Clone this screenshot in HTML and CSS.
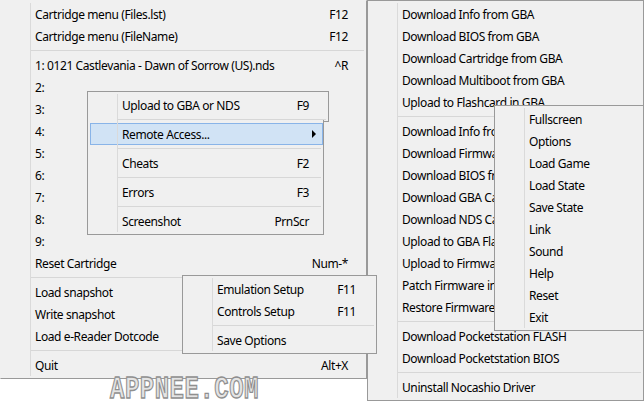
FILE: index.html
```html
<!DOCTYPE html>
<html>
<head>
    <title>Menus</title>
    <link rel="stylesheet" href="styles.css">
</head>
<body>
    <div class="screen">

        <!-- main menu -->
        <div class="menu menu-main">
            <div class="item"><span>Cartridge menu (Files.lst)</span><span>F12</span></div>
            <div class="item"><span>Cartridge menu (FileName)</span><span>F12</span></div>
            <div class="sep"></div>
            <div class="item"><span>1: 0121 Castlevania - Dawn of Sorrow (US).nds</span><span>^R</span></div>
            <div class="item"><span>2:</span></div>
            <div class="item"><span>3:</span></div>
            <div class="item"><span>4:</span></div>
            <div class="item"><span>5:</span></div>
            <div class="item"><span>6:</span></div>
            <div class="item"><span>7:</span></div>
            <div class="item"><span>8:</span></div>
            <div class="item"><span>9:</span></div>
            <div class="item"><span>Reset Cartridge</span><span>Num-*</span></div>
            <div class="sep"></div>
            <div class="item"><span>Load snapshot</span></div>
            <div class="item"><span>Write snapshot</span></div>
            <div class="item"><span>Load e-Reader Dotcode</span></div>
            <div class="sep"></div>
            <div class="item"><span>Quit</span><span>Alt+X</span></div>
        </div>

        <!-- remote menu -->
        <div class="menu menu-remote">
            <div class="item"><span>Download Info from GBA</span></div>
            <div class="item"><span>Download BIOS from GBA</span></div>
            <div class="item"><span>Download Cartridge from GBA</span></div>
            <div class="item"><span>Download Multiboot from GBA</span></div>
            <div class="item"><span>Upload to Flashcard in GBA</span></div>
            <div class="sep"></div>
            <div class="item"><span>Download Info from NDS</span></div>
            <div class="item"><span>Download Firmware from NDS</span></div>
            <div class="item"><span>Download BIOS from NDS</span></div>
            <div class="item"><span>Download GBA Cartridge from NDS</span></div>
            <div class="item"><span>Download NDS Cartridge from NDS</span></div>
            <div class="item"><span>Upload to GBA Flashcard in NDS</span></div>
            <div class="item"><span>Upload to Firmware in NDS</span></div>
            <div class="item"><span>Patch Firmware in NDS</span></div>
            <div class="item"><span>Restore Firmware in NDS</span></div>
            <div class="sep"></div>
            <div class="item"><span>Download Pocketstation FLASH</span></div>
            <div class="item"><span>Download Pocketstation BIOS</span></div>
            <div class="sep"></div>
            <div class="item"><span>Uninstall Nocashio Driver</span></div>
        </div>

        <!-- utility menu, first row sits behind the rest -->
        <div class="menu menu-upload">
            <div class="item"><span>Upload to GBA or NDS</span><span>F9</span></div>
            <div class="sep"></div>
        </div>
        <div class="menu menu-utility">
            <div class="item active"><span>Remote Access...</span><span class="arrow"></span></div>
            <div class="sep"></div>
            <div class="item"><span>Cheats</span><span>F2</span></div>
            <div class="sep"></div>
            <div class="item"><span>Errors</span><span>F3</span></div>
            <div class="sep"></div>
            <div class="item"><span>Screenshot</span><span>PrnScr</span></div>
        </div>

        <!-- options menu -->
        <div class="menu menu-options">
            <div class="item"><span>Emulation Setup</span><span>F11</span></div>
            <div class="item"><span>Controls Setup</span><span>F11</span></div>
            <div class="sep"></div>
            <div class="item"><span>Save Options</span></div>
        </div>

        <!-- window menu -->
        <div class="menu menu-window">
            <div class="item"><span>Fullscreen</span></div>
            <div class="item"><span>Options</span></div>
            <div class="item"><span>Load Game</span></div>
            <div class="item"><span>Load State</span></div>
            <div class="item"><span>Save State</span></div>
            <div class="item"><span>Link</span></div>
            <div class="item"><span>Sound</span></div>
            <div class="item"><span>Help</span></div>
            <div class="item"><span>Reset</span></div>
            <div class="item"><span>Exit</span></div>
        </div>

        <div class="watermark">APPNEE.COM</div>
    </div>
</body>
</html>
```

FILE: styles.css
```css
body {
    margin: 0;
    padding: 0;
    background-color: #fff;
    font-family: "Noto Sans", "Open Sans", sans-serif;
    font-size: 12px;
    letter-spacing: -0.4px;
    color: #000;
}

.screen {
    position: relative;
    width: 644px;
    height: 401px;
    overflow: hidden;
}

.menu {
    position: absolute;
    box-sizing: border-box;
    background-color: #f0f0f0;
    border: 1px solid #999;
    padding: 2px 0;
}

/* gutter line */
.menu::before {
    content: "";
    position: absolute;
    left: 29px;
    top: 2px;
    bottom: 2px;
    width: 1px;
    background-color: #dadada;
    z-index: 1;
}

.item {
    display: flex;
    align-items: center;
    justify-content: space-between;
    box-sizing: border-box;
    height: 22px;
    padding: 0 18px 0 34px;
    white-space: nowrap;
}

.sep {
    height: 1px;
    margin: 3px 2px 3px 29px;
    background-color: #d7d7d7;
}

.menu-main {
    left: 0;
    top: 0;
    width: 367px;
    border-left-color: #f0f0f0;
    border-top-color: #f0f0f0;
}

.menu-remote {
    left: 367px;
    top: 0;
    width: 277px;
}

.menu-upload {
    left: 87px;
    top: 91px;
    width: 242px;
    padding-bottom: 0;
}

.menu-upload .item {
    padding-right: 19px;
}

.menu-upload .sep {
    margin-bottom: 1px;
}

.menu-utility {
    left: 87px;
    top: 120px;
    width: 237px;
    border-top: none;
    padding-top: 3px;
}

.menu-utility::before {
    top: 0;
}

.menu-utility .item {
    padding-right: 14px;
}

.item.active {
    margin-left: 2px;
    padding-left: 31px;
    padding-right: 6px;
    background-color: #d1e3f5;
    border: 1px solid #89b4e8;
}

.arrow {
    width: 0;
    height: 0;
    border-left: 4px solid #000;
    border-top: 4px solid transparent;
    border-bottom: 4px solid transparent;
}

.menu-options {
    left: 182px;
    top: 275px;
    width: 195px;
}

.menu-options .item {
    padding-right: 20px;
}

.menu-window {
    left: 494px;
    top: 105px;
    width: 150px;
}

.watermark {
    position: absolute;
    left: 110px;
    top: 380px;
    font-family: "Liberation Mono", monospace;
    font-weight: bold;
    font-size: 24px;
    line-height: 16px;
    letter-spacing: 0.5px;
    color: #e4e4e4;
    -webkit-text-stroke: 1px #8f8f8f;
    transform: scaleY(1.3);
    transform-origin: top left;
}
```
